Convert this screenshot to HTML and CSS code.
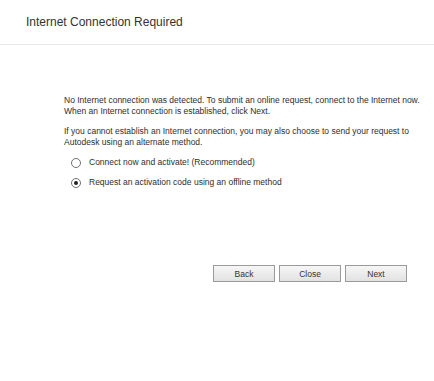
FILE: index.html
```html
<!DOCTYPE html>
<html>
<head>
<meta charset="utf-8">
<link rel="stylesheet" href="styles.css">
</head>
<body>
<div class="dialog">
  <header class="header">
    <h1 class="title">Internet Connection Required</h1>
  </header>
  <main class="content">
    <p class="para">No Internet connection was detected. To submit an online request, connect to the Internet now.<br>When an Internet connection is established, click Next.</p>
    <p class="para">If you cannot establish an Internet connection, you may also choose to send your request to<br>Autodesk using an alternate method.</p>
    <div class="options">
      <label class="option"><span class="radio"></span><span>Connect now and activate! (Recommended)</span></label>
      <label class="option"><span class="radio checked"></span><span>Request an activation code using an offline method</span></label>
    </div>
  </main>
  <footer class="buttons">
    <button class="btn">Back</button>
    <button class="btn">Close</button>
    <button class="btn">Next</button>
  </footer>
</div>
</body>
</html>
```
FILE: styles.css
```css
* { box-sizing: border-box; }
html, body { margin: 0; padding: 0; background: #fff; }
body { width: 434px; height: 381px; font-family: "Liberation Sans", Arial, sans-serif; color: #333; }
.dialog { display: flex; flex-direction: column; height: 100%; }
.header { height: 45px; border-bottom: 1px solid #e8e8e8; padding: 15px 0 0 26px; }
.title { margin: 0; font-size: 12px; font-weight: normal; color: #333; line-height: 14px; white-space: nowrap; }
.content { padding: 50px 0 0 64px; }
.para { margin: 0 0 9px; font-size: 8.5px; line-height: 11px; color: #2e2e2e; white-space: nowrap; }
.options { display: flex; flex-direction: column; gap: 9px; margin-top: 2px; padding-left: 7px; }
.option { display: flex; align-items: center; gap: 8px; height: 11px; font-size: 8.5px; line-height: 11px; color: #2e2e2e; white-space: nowrap; }
.radio { flex: none; width: 10px; height: 10px; border: 1px solid #707070; border-radius: 50%; background: #fff; display: flex; align-items: center; justify-content: center; }
.radio.checked::after { content: ""; width: 4px; height: 4px; border-radius: 50%; background: #222; }
.buttons { display: flex; gap: 4px; padding: 77px 0 0 213px; }
.btn { width: 62px; height: 17px; padding: 0; font-family: "Liberation Sans", Arial, sans-serif; font-size: 8.5px; color: #333; border: 1px solid #9a9a9a; background: linear-gradient(#f6f6f6, #e2e2e2); }
```
